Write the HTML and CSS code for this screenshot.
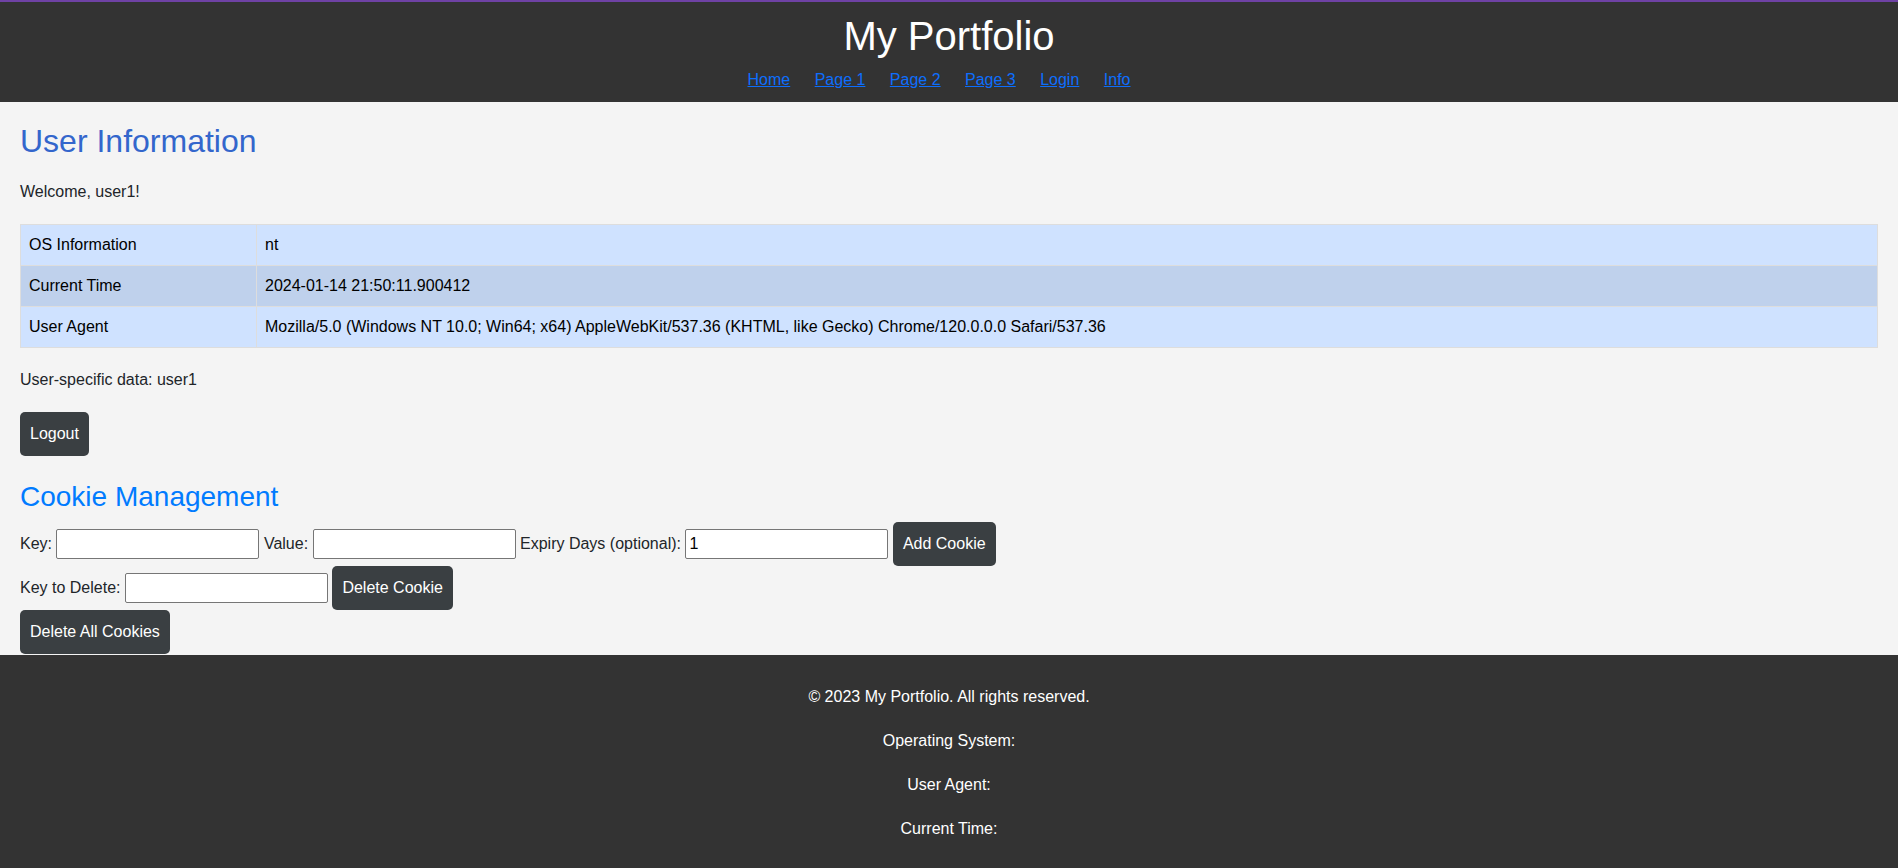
FILE: index.html
```html
<!DOCTYPE html>
<html lang="en">
<head>
<meta charset="utf-8">
<title>My Portfolio</title>
<link rel="stylesheet" href="styles.css">
</head>
<body>
<header class="site-header">
  <h1 class="site-title">My Portfolio</h1>
  <nav>
    <ul class="nav-list">
      <li class="nav-item"><a href="#home">Home</a></li>
      <li class="nav-item"><a href="#page1">Page 1</a></li>
      <li class="nav-item"><a href="#page2">Page 2</a></li>
      <li class="nav-item"><a href="#page3">Page 3</a></li>
      <li class="nav-item"><a href="#login">Login</a></li>
      <li class="nav-item"><a href="#info">Info</a></li>
    </ul>
  </nav>
</header>
<main class="content">
  <h2 class="page-title">User Information</h2>
  <p class="text">Welcome, user1!</p>
  <table class="info-table">
    <tbody>
      <tr><th scope="row">OS Information</th><td>nt</td></tr>
      <tr><th scope="row">Current Time</th><td>2024-01-14 21:50:11.900412</td></tr>
      <tr><th scope="row">User Agent</th><td>Mozilla/5.0 (Windows NT 10.0; Win64; x64) AppleWebKit/537.36 (KHTML, like Gecko) Chrome/120.0.0.0 Safari/537.36</td></tr>
    </tbody>
  </table>
  <p class="text">User-specific data: user1</p>
  <form class="form-row">
    <button class="btn" type="button">Logout</button>
  </form>
  <h3 class="section-title">Cookie Management</h3>
  <form class="form-row">
    <label for="key">Key:</label>
    <input class="field" type="text" id="key">
    <label for="value">Value:</label>
    <input class="field" type="text" id="value">
    <label for="expiry">Expiry Days (optional):</label>
    <input class="field" type="number" id="expiry" value="1">
    <button class="btn" type="button">Add Cookie</button>
  </form>
  <form class="form-row">
    <label for="delete-key">Key to Delete:</label>
    <input class="field" type="text" id="delete-key">
    <button class="btn" type="button">Delete Cookie</button>
  </form>
  <form class="form-row">
    <button class="btn" type="button">Delete All Cookies</button>
  </form>
</main>
<footer class="site-footer">
  <p>© 2023 My Portfolio. All rights reserved.</p>
  <p>Operating System:</p>
  <p>User Agent:</p>
  <p>Current Time:</p>
</footer>
</body>
</html>
```

FILE: styles.css
```css
* {
  box-sizing: border-box;
}

body {
  display: flex;
  flex-direction: column;
  min-height: 100vh;
  margin: 0;
  background: #f4f4f4;
  color: #212529;
  font: 16px/24px "Liberation Sans", Arial, sans-serif;
}

.site-header {
  padding: 10px;
  border-top: 2px solid #6f42a5;
  background: #333;
  color: #fff;
  text-align: center;
}

.site-title {
  margin: 0 0 8px;
  font-size: 40px;
  font-weight: 400;
  line-height: 48px;
}

.nav-list {
  margin: 0;
  padding: 0;
  list-style: none;
}

.nav-item {
  display: inline-block;
  margin-right: 20px;
}

.nav-item a {
  color: #0d6efd;
}

.content {
  padding: 20px 20px 1px;
}

.page-title {
  margin: 0;
  color: #3366cc;
  font-size: 32px;
  font-weight: 400;
  line-height: 38px;
}

.text {
  margin: 20px 0;
}

.info-table {
  width: 100%;
  border-collapse: collapse;
  color: #000;
}

.info-table th,
.info-table td {
  padding: 8px;
  border: 1px solid #ddd;
  background: #cfe2ff;
  font-weight: 400;
  text-align: left;
}

.info-table th {
  width: 236px;
}

.info-table tr:nth-child(even) > * {
  background: #bfd1ec;
}

.section-title {
  margin: 24px 0 8px;
  color: #007bff;
  font-size: 28px;
  font-weight: 400;
  line-height: 34px;
}

.form-row {
  margin: 0;
}

.field {
  width: 203px;
  height: 30px;
  padding: 2px 3px;
  border: 1px solid #767676;
  border-radius: 2px;
  background: #fff;
  color: #000;
  font: inherit;
  appearance: textfield;
}

.btn {
  padding: 10px;
  border: 0;
  border-radius: 5px;
  background: #3a3f42;
  color: #fff;
  font: inherit;
}

.site-footer {
  flex: 1;
  padding: 30px 10px 7px;
  background: #333;
  color: #fff;
  text-align: center;
}

.site-footer p {
  margin: 0 0 20px;
}
```
